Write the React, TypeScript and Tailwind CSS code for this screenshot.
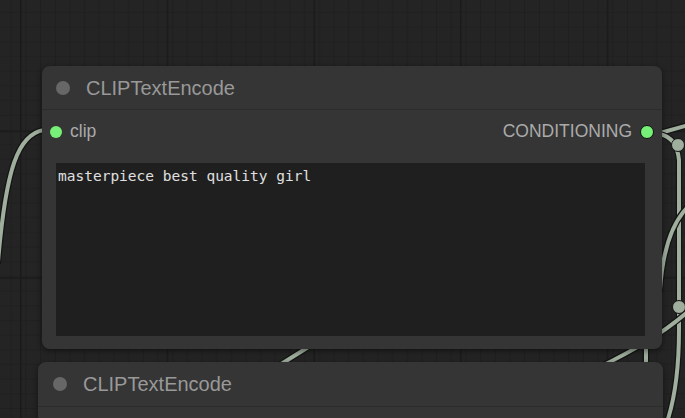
import React from "react";

const WIRE = "#9fae9d";

function Wire({ d }: { d: string }) {
  return (
    <g>
      <path d={d} fill="none" stroke="#141414" strokeWidth={6.5} strokeLinecap="round" />
      <path d={d} fill="none" stroke={WIRE} strokeWidth={4} strokeLinecap="round" />
    </g>
  );
}

function Canvas() {
  return (
    <svg className="absolute inset-0" width={685} height={418}>
      <defs>
        <pattern id="minor" x={20} y={13.3} width={14.67} height={14.67} patternUnits="userSpaceOnUse">
          <rect width={14.67} height={14.67} fill="#242424" />
          <path d="M0 0 V14.67 M0 0 H14.67" stroke="#1c1c1c" strokeWidth={1.2} />
        </pattern>
        <pattern id="major" x={20} y={130.6} width={146.7} height={146.7} patternUnits="userSpaceOnUse">
          <rect width={146.7} height={146.7} fill="url(#minor)" />
          <path d="M0 0 V146.7 M0 0 H146.7" stroke="#1a1a1a" strokeWidth={3} />
        </pattern>
      </defs>
      <rect width={685} height={418} fill="url(#major)" />

      <Wire d="M 44 130 C 18 134, 6 168, -2 262" />
      <Wire d="M 660 133 L 692 124" />
      <Wire d="M 660 134 C 670 137, 677 142, 679 160 L 679 330 C 679 370, 675 398, 667 422" />
      <Wire d="M 692 203 C 674 218, 663 245, 660 290" />
      <Wire d="M 598 368 C 630 352, 662 335, 692 308" />
      <Wire d="M 646 345 L 646 366" />
      <Wire d="M 278 366 L 310 346" />

      <circle cx={678} cy={145} r={6.5} fill={WIRE} stroke="#141414" strokeWidth={1} />
      <circle cx={679} cy={307} r={6.5} fill={WIRE} stroke="#141414" strokeWidth={1} />
    </svg>
  );
}

function TitleBar({ title, height, pad }: { title: string; height: string; pad: string }) {
  return (
    <div className={`flex items-center gap-[16px] border-b border-[#2c2c2c] ${height} ${pad}`}>
      <span className="h-[14px] w-[14px] rounded-full bg-[#676767]" />
      <span className="text-[20px] leading-none text-[#999999]">{title}</span>
    </div>
  );
}

export default function App() {
  return (
    <div className="relative h-[418px] w-[685px] overflow-hidden bg-[#242424] font-['Liberation_Sans',Arial,sans-serif]">
      <Canvas />

      <div className="absolute left-[42px] top-[66px] flex h-[283px] w-[620px] flex-col rounded-[8px] bg-[#353535] shadow-[0_2px_6px_rgba(0,0,0,0.45)]">
        <TitleBar title="CLIPTextEncode" height="h-[44px]" pad="pl-[14px]" />
        <div className="flex h-[42px] items-center justify-between px-[8px] pt-[1px]">
          <div className="flex items-center gap-[8px]">
            <span className="h-[12px] w-[12px] rounded-full bg-[#77f077]" />
            <span className="text-[17.5px] leading-none text-[#aaaaaa]">clip</span>
          </div>
          <div className="flex items-center gap-[8px]">
            <span className="text-[17.5px] leading-none text-[#aaaaaa]">CONDITIONING</span>
            <span className="h-[14px] w-[14px] rounded-full border border-[#111111] bg-[#77f077]" />
          </div>
        </div>
        <div className="ml-[14px] mr-[17px] mt-[11px] h-[173px] bg-[#1f1f1f] pl-[2px] pt-[4px] font-['DejaVu_Sans_Mono',monospace] text-[14.5px] leading-[18px] text-[#e0e0e0]">
          masterpiece best quality girl
        </div>
      </div>

      <div className="absolute left-[38px] top-[362px] h-[80px] w-[625px] rounded-t-[8px] bg-[#353535] shadow-[0_2px_6px_rgba(0,0,0,0.45)]">
        <TitleBar title="CLIPTextEncode" height="h-[45px]" pad="pl-[15px]" />
      </div>
    </div>
  );
}
